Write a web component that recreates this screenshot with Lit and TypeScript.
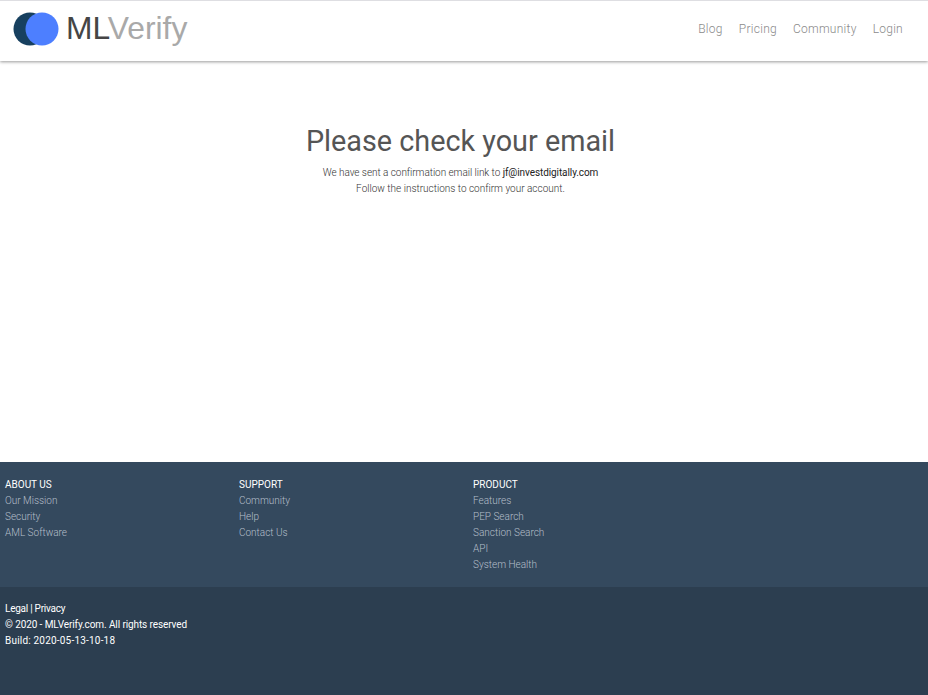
import { LitElement, html, css } from "lit";
import { customElement } from "lit/decorators.js";

const columns = [
  { title: "ABOUT US", links: ["Our Mission", "Security", "AML Software"] },
  { title: "SUPPORT", links: ["Community", "Help", "Contact Us"] },
  { title: "PRODUCT", links: ["Features", "PEP Search", "Sanction Search", "API", "System Health"] },
];

@customElement("app-root")
export class AppRoot extends LitElement {
  static styles = css`
    :host { display: flex; flex-direction: column; height: 695px; overflow: hidden; background: #fff;
      font-family: Roboto, "Liberation Sans", sans-serif; text-rendering: optimizeSpeed; }
    .head { flex: none; height: 60px; box-sizing: content-box; border-top: 1px solid #dedee2; box-shadow: 0 1px 3px rgba(0,0,0,.4);
      display: flex; align-items: center; justify-content: space-between; padding: 0 25px 0 13px; background: #fff; position: relative; }
    .brand { display: flex; align-items: center; gap: 7px; margin-bottom: 5px; font: 31.8px "Liberation Sans", sans-serif; }
    .brand svg { display: block; }
    .ml { color: #454545; }
    .verify { color: #a9a9a9; }
    nav { display: flex; gap: 16px; margin-bottom: 5px; font-size: 12px; font-weight: 300; letter-spacing: .27px; color: #8a8a8a; }
    main { flex: 1; box-sizing: border-box; text-align: center; padding: 63px 7px 0 0; color: #333; font-weight: 300; font-size: 10px; line-height: 16px; }
    h1 { margin: 0 0 7px; font-size: 28.8px; line-height: 34px; font-weight: 400; color: #555; }
    p { margin: 0; }
    .sent { letter-spacing: -.05px; }
    .mail { color: #222; font-weight: 400; letter-spacing: -.09px; }
    .links { flex: none; height: 125px; box-sizing: border-box; background: #34495e; padding: 15px 5px 0;
      display: grid; grid-template-columns: repeat(3, 234px); font-size: 10px; line-height: 16px; }
    .title { color: #fff; font-weight: 400; }
    .link { color: #b4bfca; font-weight: 300; }
    .legal { flex: none; height: 108px; box-sizing: border-box; background: #2c3e50; padding: 14px 5px 0;
      color: #fff; font-size: 10px; line-height: 16px; font-weight: 400; }
    .legal-links { letter-spacing: -.25px; }
    .copy { letter-spacing: -.1px; }
    .build { letter-spacing: .2px; }
  `;
  render() {
    return html`
      <header class="head">
        <div class="brand">
          <svg width="46" height="34" viewBox="0 0 46 34" aria-hidden="true">
            <circle cx="17" cy="17" r="16.5" fill="#17405f"></circle>
            <circle cx="29" cy="17" r="16.5" fill="#4d7fff"></circle>
          </svg>
          <span><span class="ml">ML</span><span class="verify">Verify</span></span>
        </div>
        <nav><span>Blog</span><span>Pricing</span><span>Community</span><span>Login</span></nav>
      </header>
      <main>
        <h1>Please check your email</h1>
        <p><span class="sent">We have sent a confirmation email link to</span> <span class="mail">jf@investdigitally.com</span></p>
        <p>Follow the instructions to confirm your account.</p>
      </main>
      <section class="links">
        ${columns.map(c => html`<div>
          <div class="title">${c.title}</div>
          ${c.links.map(l => html`<div class="link">${l}</div>`)}
        </div>`)}
      </section>
      <footer class="legal">
        <div class="legal-links">Legal | Privacy</div>
        <div class="copy">© 2020 - MLVerify.com. All rights reserved</div>
        <div class="build">Build: 2020-05-13-10-18</div>
      </footer>
    `;
  }
}
